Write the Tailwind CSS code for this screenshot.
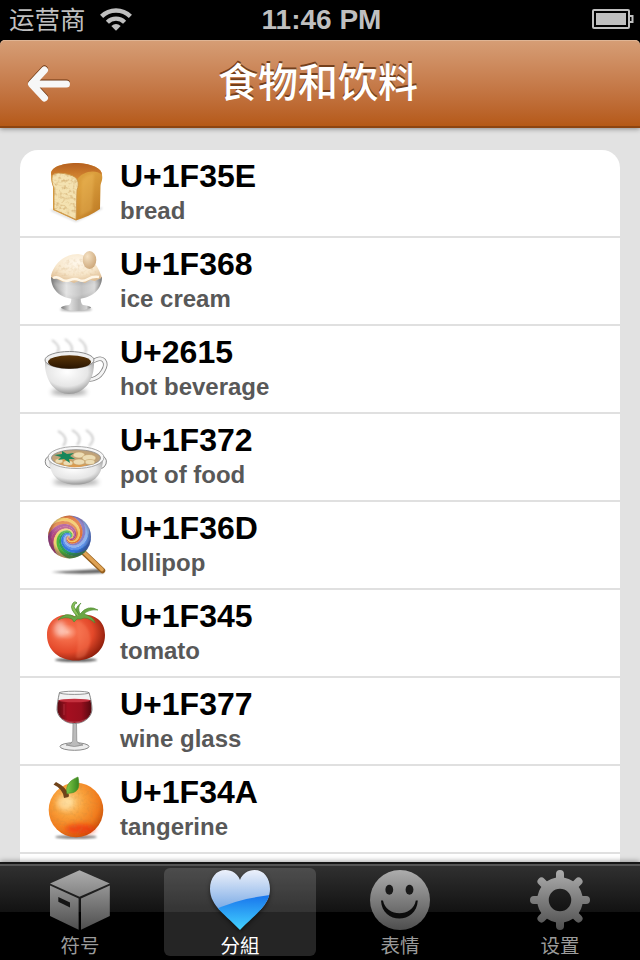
<!DOCTYPE html>
<html lang="zh-CN">
<head>
<meta charset="utf-8">
<title>食物和饮料</title>
<script src="https://cdn.jsdelivr.net/npm/@tailwindcss/browser@4"></script>
</head>
<body class="bg-black">
<div class="relative flex h-[960px] w-[640px] flex-col overflow-hidden bg-black font-['Liberation_Sans','Noto_Sans_CJK_SC',sans-serif]">

  <!-- Status bar -->
  <div class="grid h-10 shrink-0 grid-cols-3 items-center pl-[9px] pr-[6px] text-[#bfbfbf]">
    <div class="flex items-center gap-[14px]">
      <span class="text-[25.5px] leading-10">运营商</span>
      <svg class="h-10 w-8" viewBox="0 0 32 40" fill="none" stroke="#bfbfbf" stroke-width="4.4">
        <path d="M1.6 16.4A20.5 20.5 0 0 1 30.4 16.4"/><path d="M7.4 22.2A12.2 12.2 0 0 1 24.6 22.2"/>
        <path d="M16 30.8L11.3 26Q16 22 20.7 26Z" fill="#bfbfbf" stroke="none"/>
      </svg>
    </div>
    <div class="text-center text-[28px] font-bold leading-10 whitespace-nowrap">11:46 PM</div>
    <svg class="h-10 w-[42px] justify-self-end" viewBox="0 0 42 40">
      <rect x="1" y="10" width="36" height="18" rx="1" fill="none" stroke="#bfbfbf" stroke-width="2"/>
      <rect x="4" y="13" width="30" height="12" fill="#bfbfbf"/>
      <path d="M38 16h2.5v6H38" fill="none" stroke="#bfbfbf" stroke-width="2"/>
    </svg>
  </div>

  <!-- Navigation bar -->
  <header class="relative z-10 flex h-[88px] shrink-0 items-center rounded-t-[5px] border-b-2 border-[#8d4511] bg-linear-to-b from-[#d69e76] to-[#b55916] shadow-[0_1px_5px_rgba(0,0,0,0.4),inset_0_1px_0_#dfb595]">
    <svg class="mt-[2px] ml-[26px] h-[44px] w-[48px]" viewBox="0 0 48 44" fill="none" stroke-linecap="round" stroke-linejoin="round" stroke-width="7">
      <path d="M18.5 7L5.5 21L18.5 35M6.5 21H40.5" stroke="#6b3510"/>
      <path d="M18.5 8L5.5 22L18.5 36M6.5 22H40.5" stroke="#f7f7f7"/>
    </svg>
    <h1 class="ml-[144px] text-[40px] font-medium leading-[80px] text-white [text-shadow:0_-2px_0_#74401c]">食物和饮料</h1>
  </header>

  <!-- List -->
  <main class="h-[734px] shrink-0 overflow-hidden bg-[#e2e2e2] px-5 pt-[22px]">
    <ul id="list" class="h-[720px] rounded-t-[18px] bg-white"></ul>
  </main>

  <!-- Tab bar -->
  <nav class="relative z-10 flex h-[98px] shrink-0 border-t-2 border-[#161616] bg-[linear-gradient(#555_0,#555_2px,#303030_2px,#121212_48px,#000_48px)] text-[19.5px] text-[#9b9b9b] shadow-[0_-1px_5px_rgba(0,0,0,0.35)]">
    <div class="flex w-40 flex-col items-center pt-[6px]">
      <svg class="h-[60px] w-[60px] overflow-visible" viewBox="0 0 60 60">
        <defs><linearGradient id="gray" gradientUnits="userSpaceOnUse" x1="0" y1="0" x2="0" y2="60"><stop stop-color="#adadad"/><stop offset="1" stop-color="#4e4e4e"/></linearGradient></defs>
        <g fill="url(#gray)"><path d="M29.5 .3L59.8 13.6L29.5 26.8L0 13.6Z"/><path d="M0 15.6L28.6 28.6V59.8L0 46Z"/><path d="M59.8 15.6L31 28.6V59.8L59.8 46Z"/></g>
        <path d="M8.3 27L20 32.5V37.5L8.3 31.8Z" fill="#151515"/>
      </svg>
      <span class="mt-[3px] leading-[26px]">符号</span>
    </div>
    <div class="flex w-40 flex-col px-1 pt-1">
      <div class="flex h-[88px] flex-col items-center rounded-[6px] bg-white/[0.145] pt-[2px] text-white">
        <svg class="h-[60px] w-[60px] overflow-visible drop-shadow-[0_2px_2px_rgba(0,0,0,0.5)]" viewBox="0 0 60 60">
          <defs>
            <linearGradient id="heartLight" x1="0" y1="0" x2="0" y2="1"><stop stop-color="#edf1fb"/><stop offset="1" stop-color="#78a9e5"/></linearGradient>
            <linearGradient id="heartDeep" gradientUnits="userSpaceOnUse" x1="0" y1="25" x2="0" y2="60"><stop stop-color="#1874ec"/><stop offset="1" stop-color="#43d3ff"/></linearGradient>
            <clipPath id="heartClip"><path d="M30 10C28 4 22 0 15.5 0C6 0 0 8 0 19C0 36 17 46 30 60C43 46 60 36 60 19C60 8 54 0 44.5 0C38 0 32 4 30 10Z"/></clipPath>
          </defs>
          <g clip-path="url(#heartClip)"><path d="M0 0H60V40H0Z" fill="url(#heartLight)"/><path d="M0 42Q25 29 60 25V60H0Z" fill="url(#heartDeep)"/></g>
        </svg>
        <span class="mt-[2px] leading-[26px] font-['Noto_Sans_CJK_TC',sans-serif]">分組</span>
      </div>
    </div>
    <div class="flex w-40 flex-col items-center pt-[6px]">
      <svg class="h-[60px] w-[60px]" viewBox="0 0 60 60">
        <circle cx="30" cy="30" r="30" fill="url(#gray)"/>
        <g fill="#1a1a1a"><ellipse cx="19.3" cy="19.7" rx="3.9" ry="5"/><ellipse cx="39.5" cy="19.7" rx="3.9" ry="5"/></g>
        <path d="M11 30.5C12 54.500 46.500 54.500 47.800 30.500H45.800C43 47.500 16 47.500 13 30.500Z" fill="#0c0c0c"/>
      </svg>
      <span class="mt-[3px] leading-[26px]">表情</span>
    </div>
    <div class="flex w-40 flex-col items-center pt-[6px]">
      <svg class="h-[60px] w-[60px]" viewBox="0 0 60 60" fill="none" stroke="url(#gray)">
        <path d="M30 4V9M30.01 51V56M4 30H9M51 30.01H56M11.5 11.5L15 15M45 45L48.5 48.5M48.5 11.5L45 15M15 45L11.5 48.5" stroke-width="8" stroke-linecap="round"/>
        <circle cx="30" cy="30" r="17" stroke-width="11.5"/>
      </svg>
      <span class="mt-[3px] leading-[26px]">设置</span>
    </div>
  </nav>
</div>

<!-- Emoji artwork, 100 x 86 per row -->
<svg class="absolute h-0 w-0">
  <defs>
    <filter id="soft" x="-30%" y="-30%" width="160%" height="160%"><feGaussianBlur stdDeviation="1.3"/></filter>
    <filter id="soft2" x="-50%" y="-50%" width="200%" height="200%"><feGaussianBlur stdDeviation="2.5"/></filter>
    <filter id="blend"><feGaussianBlur stdDeviation=".6"/></filter>
    <filter id="crumb" color-interpolation-filters="sRGB"><feTurbulence type="fractalNoise" baseFrequency=".3" numOctaves="2" seed="4"/><feColorMatrix values="0 0 0 0 .72  0 0 0 0 .52  0 0 0 0 .25  0 2.4 0 0 -1.1"/><feComposite in2="SourceGraphic" operator="in"/></filter>
    <linearGradient id="crust" x1="0" x2="1" y1="0" y2="1"><stop stop-color="#d49a3e"/><stop offset=".5" stop-color="#dca03e"/><stop offset="1" stop-color="#b87420"/></linearGradient>
    <linearGradient id="crustTop" x1="0" x2="0" y1="0" y2="1"><stop stop-color="#b5601f"/><stop offset="1" stop-color="#d98b35"/></linearGradient>
    <linearGradient id="silver" x1="0" x2="1"><stop stop-color="#777"/><stop offset=".3" stop-color="#dedede"/><stop offset=".6" stop-color="#b5b5b5"/><stop offset=".85" stop-color="#d2d2d2"/><stop offset="1" stop-color="#777"/></linearGradient>
    <radialGradient id="cream" cx=".5" cy=".3" r=".7"><stop stop-color="#fff8ec"/><stop offset=".6" stop-color="#f7e6ca"/><stop offset="1" stop-color="#dfbd93"/></radialGradient>
    <radialGradient id="nut" cx=".35" cy=".3" r=".8"><stop stop-color="#f5e2c4"/><stop offset="1" stop-color="#c9a274"/></radialGradient>
    <radialGradient id="china" cx=".45" cy=".35" r=".65"><stop stop-color="#fff"/><stop offset=".65" stop-color="#e6e6e6"/><stop offset="1" stop-color="#999"/></radialGradient>
    <linearGradient id="coffee" x1="0" x2="0" y1="0" y2="1"><stop stop-color="#5c3608"/><stop offset="1" stop-color="#291501"/></linearGradient>
    <radialGradient id="tomato" cx=".35" cy=".38" r=".68"><stop stop-color="#ffb59c"/><stop offset=".25" stop-color="#f46b48"/><stop offset=".65" stop-color="#e4492a"/><stop offset="1" stop-color="#8f1e0c"/></radialGradient>
    <linearGradient id="wine" x1="0" x2="1"><stop stop-color="#5b0b12"/><stop offset=".3" stop-color="#a50f20"/><stop offset=".7" stop-color="#980f1e"/><stop offset="1" stop-color="#55080f"/></linearGradient>
    <radialGradient id="orange" cx=".38" cy=".34" r=".7"><stop stop-color="#ffd384"/><stop offset=".4" stop-color="#f9a03a"/><stop offset=".78" stop-color="#f07a1c"/><stop offset="1" stop-color="#c94f08"/></radialGradient>
    <linearGradient id="leaf" x1="0" x2="1"><stop stop-color="#80c948"/><stop offset="1" stop-color="#35851e"/></linearGradient>
    <radialGradient id="candyShade" cx=".5" cy=".45" r=".5"><stop offset=".8" stop-color="#000" stop-opacity="0"/><stop offset="1" stop-color="#402040" stop-opacity=".4"/></radialGradient>
    <clipPath id="candyClip"><circle cx="49.5" cy="35" r="21.5"/></clipPath>
  </defs>

  <symbol id="bread" viewBox="0 0 100 86">
    <path d="M31 60L56 71L82 58" stroke="#000" stroke-opacity=".3" fill="none" filter="url(#soft)"/>
    <path d="M31 24C31 15 48 13 58 13C72 14 82 18 82 25C83 30 81 32 80.5 36L80 59C73 64 64 68 56 70.5L33 60V36C31 31 31 28 31 24Z" fill="url(#crust)"/>
    <path d="M31 24C31 15 48 13 58 13C72 14 82 18 82 25C76 19 62 21 57 30C54 24 44 21 32 26Z" fill="url(#crustTop)" filter="url(#blend)"/>
    <path d="M32 28C32 21 43 23 50 25C58 27 60 33 57 40L56 69.5L34 59.5V38C32 34 32 31 32 28Z" fill="#f4e2b1"/>
    <path d="M32 28C32 21 43 23 50 25C58 27 60 33 57 40L56 69.5L34 59.5V38C32 34 32 31 32 28Z" filter="url(#crumb)" opacity=".5"/>
    <path d="M32 28C32 21 43 23 50 25C58 27 60 33 57 40L56 69.5L34 59.5V38C32 34 32 31 32 28Z" fill="none" stroke="#c99245" stroke-width=".8"/>
    <path d="M62 30Q66 24 74 24L72 60L60 66Z" fill="#f2c064" opacity=".3" filter="url(#soft)"/>
  </symbol>

  <symbol id="icecream" viewBox="0 0 100 86">
    <ellipse cx="56" cy="71.5" rx="16" ry="1.8" opacity=".35" filter="url(#soft)"/>
    <path d="M51 57H61Q60 65 63 67Q71 68 71 70Q64 73 56 73Q46 73 41 70Q41 68 49 67Q52 65 51 57Z" fill="url(#silver)"/>
    <path d="M31 39H82C82 54 68 61 56 61C43 61 31 54 31 39Z" fill="url(#silver)"/>
    <path d="M33 44Q56 50 80 44Q75 57 56 59Q38 57 33 44Z" fill="#fff" opacity=".2" filter="url(#soft)"/>
    <path d="M31 38C34 26 44 16 58 16C72 18 77 27 81 37Q83 40 79 41L75 43L70 42L65 45L59 43L54 45L49 43L43 44L37 41Q31 41 31 38Z" fill="url(#cream)"/>
    <path d="M36 31C43 20 52 19 63 21C72 24 76 30 77 37L35 38Z" filter="url(#crumb)" opacity=".2"/>
    <path d="M33 40Q37 38 41 41T50 42T59 42T68 41T79 39" fill="none" stroke="#fff6e6" stroke-width="2.5"/>
    <ellipse cx="69.5" cy="22" rx="6.8" ry="9" fill="url(#nut)"/>
  </symbol>

  <symbol id="hot" viewBox="0 0 100 86">
    <ellipse cx="49" cy="66" rx="18" ry="3" opacity=".4" filter="url(#soft2)"/>
    <g fill="none" stroke="#bbb" stroke-width="2" opacity=".7" filter="url(#soft)"><path d="M32 14Q42 21 37 27M45 13Q55 20 51 27M59 13Q69 20 65 28"/></g>
    <path d="M72 36C84 28 88 37 83 45C80 51 72 55 67 53" fill="none" stroke="#858585" stroke-width="4.5"/>
    <path d="M72 36C84 28 88 37 83 45C80 51 72 55 67 53" fill="none" stroke="#f5f5f5" stroke-width="2.8"/>
    <path d="M25 34C24 57 37 68 49 68C62 68 75 57 74 34Z" fill="url(#china)"/>
    <ellipse cx="49.5" cy="34" rx="24.5" ry="8.5" fill="#f0f0f0" stroke="#8d8d8d"/>
    <ellipse cx="49.5" cy="36" rx="21.5" ry="6.8" fill="url(#coffee)"/>
  </symbol>

  <symbol id="pot" viewBox="0 0 100 86">
    <ellipse cx="56" cy="68" rx="23" ry="3" opacity=".4" filter="url(#soft2)"/>
    <g fill="none" stroke="#b9b9b9" stroke-width="2" opacity=".75" filter="url(#soft)"><path d="M38 17Q50 24 43 32M52 16Q64 23 57 31M66 16Q78 24 69 32"/></g>
    <path d="M31 41Q23 44 26 51Q30 56 36 53H76Q83 57 86 50Q88 43 80 41Z" fill="#f5f5f5" stroke="#888" stroke-width="1"/>
    <path d="M29 46C30 63 40 70.5 56 70.5C72 70.5 82 63 83 46Z" fill="url(#china)"/>
    <ellipse cx="56" cy="43.5" rx="28" ry="11" fill="#f7f7f7" stroke="#959595" stroke-width=".8"/>
    <ellipse cx="56" cy="44" rx="24.5" ry="8.3" fill="#bfa27a" stroke="#888" stroke-width=".8"/>
    <path d="M34 46Q43 41 51 46Q60 53 72 49Q64 54 50 53Q38 51 34 46Z" fill="#db9c51"/>
    <g fill="#ecdcb4" stroke="#bf995f" stroke-width=".5"><ellipse cx="59" cy="41" rx="6" ry="3"/><ellipse cx="69" cy="44" rx="7" ry="3.5"/><ellipse cx="59" cy="48" rx="6" ry="3"/><ellipse cx="39" cy="47" rx="4" ry="2.5"/><ellipse cx="48" cy="49" rx="5" ry="2.5"/><ellipse cx="70" cy="48" rx="5" ry="2.5"/></g>
    <path d="M34 41L42 40L42 37L47 40L54 39L50 42L55 45L49 45L50 49L44 45L38 46L41 43Z" fill="#16865a"/>
  </symbol>

  <symbol id="lollipop" viewBox="0 0 100 86">
    <path d="M31 70L80 67L84 71Q56 73 31 70Z" opacity=".6" filter="url(#soft)"/>
    <path d="M63 50L82.5 68.5" stroke="#96601e" stroke-width="5.5" stroke-linecap="round"/>
    <path d="M63 49.5L82 67.5" stroke="#dfa254" stroke-width="3.6" stroke-linecap="round"/>
    <g clip-path="url(#candyClip)"><g id="swirl" filter="url(#blend)"></g></g>
    <circle cx="49.5" cy="35" r="21.5" fill="url(#candyShade)"/>
    <ellipse cx="46" cy="24" rx="15" ry="8" fill="#fff" opacity=".2" filter="url(#soft2)"/>
  </symbol>

  <symbol id="tom" viewBox="0 0 100 86">
    <ellipse cx="56" cy="70" rx="21" ry="2" opacity=".6" filter="url(#soft)"/>
    <path d="M56 27C49 22 27 24 27 45C27 61 40 70.5 56 70.5C72 70.5 85 61 85 45C85 24 63 22 56 27Z" fill="url(#tomato)"/>
    <path d="M60 31Q78 44 65 66Q58 70 56 67Q60 50 56 31Z" fill="#ff8d68" opacity=".3" filter="url(#soft)"/>
    <ellipse cx="40" cy="39" rx="6" ry="8" fill="#fff" opacity=".5" filter="url(#soft2)"/>
    <path d="M55 27Q46 21 38 30Q45 26 52 29L54 32L57 29L61 29Q67 26 75 33Q74 27 64 24Q69 19 78 20Q68 14 60 24Q57 17 61 13Q54 18 56 25Z" fill="#6aa644" stroke="#4c8a2e" stroke-width=".6"/>
    <path d="M57 26Q50 19 52 15Q54 10 57 13Q54 13 54 17L59 25" fill="#8cc45b" stroke="#4b8a2d" stroke-width=".8"/>
  </symbol>

  <symbol id="wineglass" viewBox="0 0 100 86">
    <ellipse cx="54.5" cy="68.5" rx="14.5" ry="3.8" fill="#ededed" stroke="#8a8a8a"/>
    <path d="M53 45H56.5L56.8 63Q58 66 63 67Q54 70 46 67Q52 66 52.7 63Z" fill="#bbb" stroke="#777" stroke-width=".6"/>
    <path d="M39.5 14.5C38 21 37 27 37 32C38 41 47 45.5 54.5 45.5C62 45.5 71 41 72 32C72 27 71 21 69 14.5Z" fill="#f2f2f2" stroke="#858585"/>
    <path d="M38.5 22C37.5 27 37 31 37.8 34C40 42 48 45 54.5 45C61 45 69 42 71.2 34C72 30 71 26 70.5 22Z" fill="url(#wine)"/>
    <ellipse cx="54.5" cy="22.5" rx="15.5" ry="1.7" fill="#c4313f"/>
    <ellipse cx="54.3" cy="14.8" rx="14.7" ry="1.6" fill="#fafafa" stroke="#777" stroke-width=".8"/>
    <path d="M44 26V37" stroke="#e05a67" stroke-width="2" opacity=".2"/>
    <path d="M42 41Q54 47 67 41" stroke="#ccc" stroke-width="1.2" fill="none" opacity=".2"/>
  </symbol>

  <symbol id="tang" viewBox="0 0 100 86">
    <ellipse cx="56" cy="71" rx="21" ry="1.8" opacity=".5" filter="url(#soft)"/>
    <circle cx="56" cy="44" r="27.3" fill="url(#orange)"/>
    <ellipse cx="60" cy="63" rx="15" ry="5" fill="#f02e08" opacity=".7" filter="url(#soft2)"/>
    <circle cx="56" cy="44" r="26" filter="url(#crumb)" opacity=".25"/>
    <ellipse cx="45" cy="37" rx="8" ry="7" fill="#ffe8b4" opacity=".6" filter="url(#soft2)"/>
    <path d="M33.5 18.5L36 16Q46 21 49 29L48.5 31L44 32Q43 23 33.5 18.5Z" fill="#70431a"/>
    <path d="M47 28C45 18 51 14 58 11C60 20 59 26 51 27Q48 27 47 28Z" fill="url(#leaf)" stroke="#4b8b25" stroke-width=".6"/>
  </symbol>
</svg>

<script>
  // Lollipop spiral: coloured arms between consecutive curves that wind tighter near the centre.
  const colors = ['#5f93ea', '#8fb4ee', '#8a7fc4', '#e0743a', '#f2c65c', '#de7a35', '#a8478c', '#b5477c', '#f0d070', '#4fb53a', '#2f9f5c', '#3478dc'];
  const step = 2 * Math.PI / colors.length;
  const edge = (a, r) => {
    const t = a + 3.1 * Math.log(25 / (r + 3));
    return `${(49.5 + r * Math.cos(t)).toFixed(2)} ${(35 + r * Math.sin(t)).toFixed(2)}`;
  };
  document.getElementById('swirl').innerHTML = colors.map((c, i) => {
    const a = -i * step, p = [];
    for (let r = 0; r <= 24; r += .5) p.push(edge(a, r));
    for (let r = 24; r >= 0; r -= .5) p.push(edge(a - step * 1.1, r));
    return `<path d="M${p.join('L')}Z" fill="${c}"/>`;
  }).join('');

  const rows = [
    ['bread', 'U+1F35E', 'bread'], ['icecream', 'U+1F368', 'ice cream'], ['hot', 'U+2615', 'hot beverage'],
    ['pot', 'U+1F372', 'pot of food'], ['lollipop', 'U+1F36D', 'lollipop'], ['tom', 'U+1F345', 'tomato'],
    ['wineglass', 'U+1F377', 'wine glass'], ['tang', 'U+1F34A', 'tangerine']
  ];
  document.getElementById('list').innerHTML = rows.map(([icon, code, name]) => `
    <li class="flex h-[88px] border-b-2 border-[#e0e0e0]">
      <svg class="h-[86px] w-[100px] shrink-0"><use href="#${icon}"/></svg>
      <div class="flex flex-col pt-[8px]">
        <span class="text-[32px] leading-[36px] font-bold text-black">${code}</span>
        <span class="mt-[3px] text-2xl leading-[28px] font-bold text-[#585858]">${name}</span>
      </div>
    </li>`).join('');
</script>
</body>
</html>
